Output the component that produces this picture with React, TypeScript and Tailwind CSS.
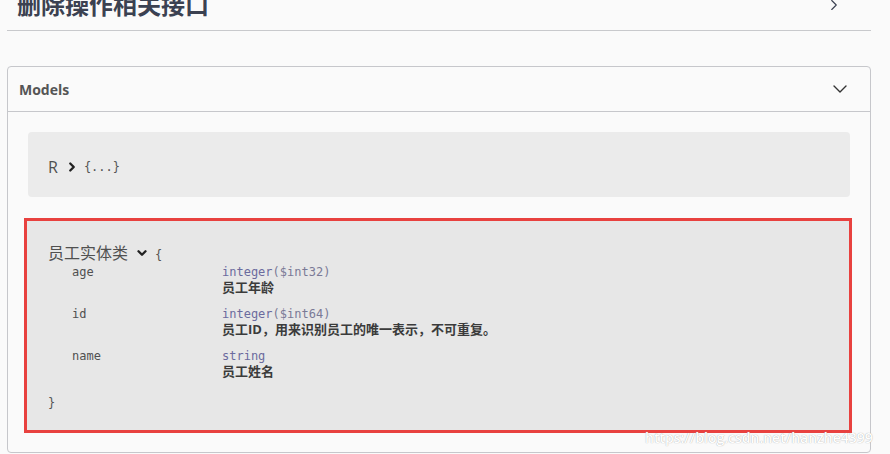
import { ChevronDown, ChevronRight } from "lucide-react";

type Prop = {
  name: string;
  type: string;
  format?: string;
  desc: string;
};

const props: Prop[] = [
  { name: "age", type: "integer", format: "$int32", desc: "员工年龄" },
  { name: "id", type: "integer", format: "$int64", desc: "员工ID，用来识别员工的唯一表示，不可重复。" },
  { name: "name", type: "string", desc: "员工姓名" },
];

const sans = "font-['Open_Sans','Noto_Sans_CJK_SC',sans-serif]";
const mono = "font-['DejaVu_Sans_Mono','Noto_Sans_CJK_SC',monospace]";

export default function App() {
  return (
    <div className={`relative h-[454px] w-[890px] overflow-hidden bg-[#fafafa] ${sans}`}>
      <div className="ml-[7px] mr-[19px] -mt-[20px] flex h-[51px] items-center justify-between border-b border-[#c8c9cc] pl-[10px] pr-[28px]">
        <h4 className="text-[24px] font-bold text-[#3b4151]">删除操作相关接口</h4>
        <ChevronRight className="h-[18px] w-[18px] text-[#3b4151]" strokeWidth={1.5} />
      </div>

      <section className="ml-[7px] mr-[19px] mt-[35px] rounded-[4px] border border-[#c6c7cb]">
        <div className="flex h-[45px] items-center justify-between border-b border-[#c6c7cb] pl-[11px] pr-[18px]">
          <span className="text-[14px] font-bold text-[#555]">Models</span>
          <ChevronDown className="h-[24px] w-[24px] text-[#333]" strokeWidth={1.4} />
        </div>

        <div className="pb-[19px] pt-[20px]">
          <div className="mx-[20px] flex h-[65px] items-center rounded-[4px] bg-[#ebebeb] pl-[20px] pt-[5px]">
            <span className="text-[16px] text-[#505050]">R</span>
            <ChevronRight className="ml-[7px] h-[14px] w-[14px] text-[#222]" strokeWidth={4} />
            <span className={`ml-[5px] text-[12px] text-[#555] ${mono}`}>{"{...}"}</span>
          </div>

          <div className="ml-[16px] mr-[18px] mt-[21px] h-[215px] border-[3px] border-[#e8413f] bg-[#e7e7e7] pl-[21px] pt-[20px]">
            <div className="flex items-center">
              <span className="text-[16px] leading-[24px] text-[#505050]">员工实体类</span>
              <ChevronDown className="ml-[7px] h-[14px] w-[14px] text-[#222]" strokeWidth={4} />
              <span className={`ml-[6px] mt-[3px] text-[12px] text-[#555] ${mono}`}>{"{"}</span>
            </div>
            <div className={`mt-[-1px] pl-[24px] text-[12px] ${mono}`}>
              {props.map((p) => (
                <div key={p.name} className="flex h-[42px]">
                  <div className="w-[150px] leading-[16px] text-[#505050]">{p.name}</div>
                  <div className="leading-[16px]">
                    <div className="text-[#6b6b9e]">
                      {p.type}
                      {p.format ? <span className="text-[#7a7a96]">({p.format})</span> : null}
                    </div>
                    <div className={`-mt-[1px] text-[13px] font-bold text-[#3b3b3b] ${sans}`}>{p.desc}</div>
                  </div>
                </div>
              ))}
            </div>
            <div className={`mt-[4px] text-[12px] text-[#555] ${mono}`}>{"}"}</div>
          </div>
        </div>
      </section>

      <div className="pointer-events-none absolute left-[645px] top-[427px] text-[14px] font-semibold text-white [text-shadow:0_0_1px_#999]">
        https://blog.csdn.net/hanzhe4399
      </div>
    </div>
  );
}
